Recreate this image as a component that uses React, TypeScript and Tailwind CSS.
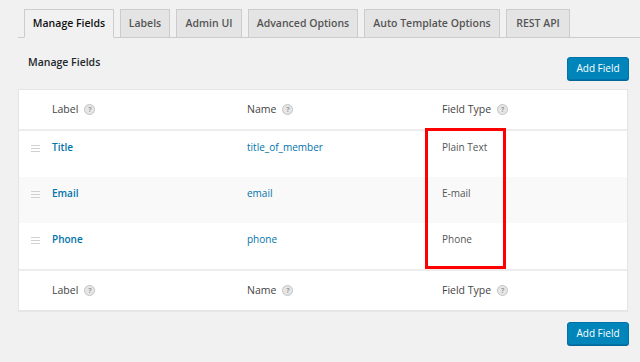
import React from 'react';

const tabs = [
  { t: 'Manage Fields', w: 'w-[90px]' },
  { t: 'Labels', w: 'w-[50px]' },
  { t: 'Admin UI', w: 'w-[66px]' },
  { t: 'Advanced Options', w: 'w-[110px]' },
  { t: 'Auto Template Options', w: 'w-[136px]' },
  { t: 'REST API', w: 'w-[64px]' },
];

const rows = [
  { label: 'Title', name: 'title_of_member', type: 'Plain Text', alt: false },
  { label: 'Email', name: 'email', type: 'E-mail', alt: true },
  { label: 'Phone', name: 'phone', type: 'Phone', alt: false },
];

function Help() {
  return (
    <span className="ml-[6px] inline-flex h-[11px] w-[11px] items-center justify-center rounded-full border border-[#c4c4c4] bg-[#e6e6e6] text-[7px] font-bold leading-none text-[#999]">
      ?
    </span>
  );
}

function Handle() {
  return (
    <span className="flex w-[21px] flex-col gap-[2px] pt-[5px]">
      <span className="h-px w-[9px] bg-[#d0d0d0]" />
      <span className="h-px w-[9px] bg-[#d0d0d0]" />
      <span className="h-px w-[9px] bg-[#d0d0d0]" />
    </span>
  );
}

function HeaderRow({ top }: { top?: boolean }) {
  return (
    <div
      className={`flex h-[41px] items-center pl-[33px] text-[10.5px] text-[#444] ${
        top ? 'border-b-2 border-[#ececec]' : 'border-t-2 border-[#ececec]'
      }`}
    >
      <div className="flex w-[195px] items-center">Label<Help /></div>
      <div className="flex w-[195px] items-center">Name<Help /></div>
      <div className="flex items-center">Field Type<Help /></div>
    </div>
  );
}

function AddButton() {
  return (
    <button className="h-[23px] w-[62px] rounded-[3px] border border-[#0073aa] bg-[#0085ba] text-[10px] text-white shadow-[0_1px_0_#006799]">
      Add Field
    </button>
  );
}

export default function App() {
  return (
    <div
      className="min-h-[362px] w-[640px] bg-[#f1f1f1] pt-[9px]"
      style={{ fontFamily: '"Open Sans", sans-serif' }}
    >
      {/* tabs */}
      <div className="ml-[18px] flex items-end border-b border-[#cccccc] pl-[6px]">
        {tabs.map((tab, i) => (
          <div
            key={tab.t}
            className={`-mb-px mr-[6px] flex h-[29px] items-center justify-center whitespace-nowrap border border-[#cccccc] text-[10.5px] font-semibold ${tab.w} ${
              i === 0 ? 'border-b-[#f1f1f1] bg-[#f1f1f1] text-[#111]' : 'bg-[#e4e4e4] text-[#555]'
            }`}
          >
            {tab.t}
          </div>
        ))}
      </div>

      <div className="ml-[18px] mr-[11px]">
        <div className="flex items-start justify-between pt-[15px]">
          <h2 className="pl-[10px] text-[10.5px] font-semibold leading-[18px] text-[#23282d]">Manage Fields</h2>
          <div className="pt-[1px]"><AddButton /></div>
        </div>

        {/* table */}
        <div className="relative mt-[9px] mr-[1px] border border-[#e5e5e5] bg-white shadow-[0_1px_1px_rgba(0,0,0,0.04)]">
          <HeaderRow top />
          {rows.map((r) => (
            <div
              key={r.label}
              className={`flex h-[46px] items-start pl-[12px] pt-[9px] text-[10px] leading-[14px] ${
                r.alt ? 'bg-[#f9f9f9]' : 'bg-white'
              }`}
            >
              <Handle />
              <div className="w-[195px] font-semibold text-[#0073aa]">{r.label}</div>
              <div className="w-[195px] text-[#0073aa]">{r.name}</div>
              <div className="text-[10px] text-[#555]">{r.type}</div>
            </div>
          ))}
          <HeaderRow />

          <div className="pointer-events-none absolute left-[406px] top-[38px] h-[141px] w-[81px] border-[3px] border-[#ff0000]" />
        </div>

        <div className="flex justify-end pt-[11px]">
          <AddButton />
        </div>
      </div>
    </div>
  );
}
